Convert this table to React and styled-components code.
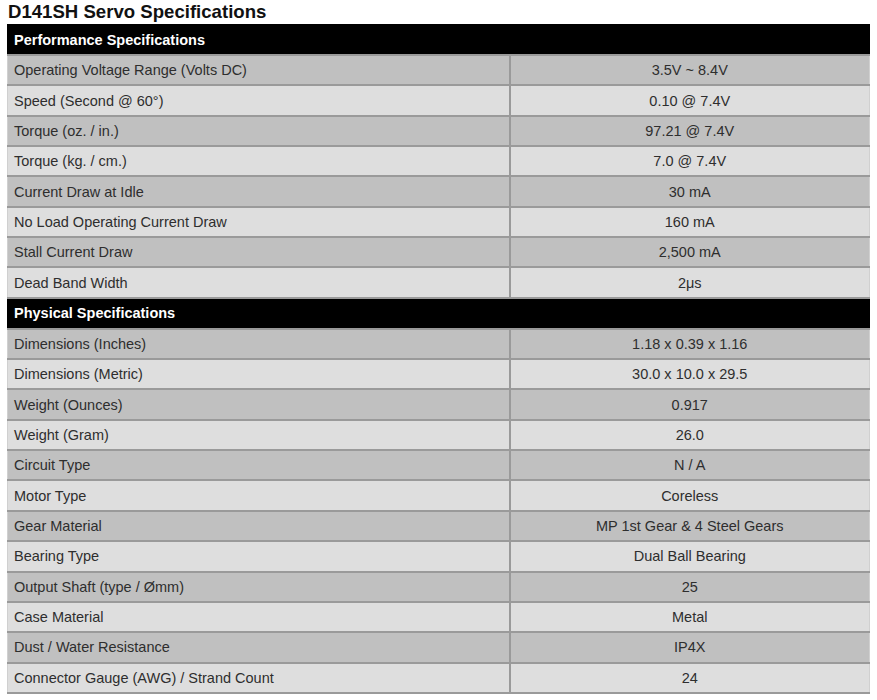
import styled, { createGlobalStyle } from 'styled-components';

const GlobalStyle = createGlobalStyle`
  body {
    margin: 0;
    background: #ffffff;
    font-family: 'Liberation Sans', Arial, sans-serif;
  }
`;

const sections = [
  {
    title: 'Performance Specifications',
    rows: [
      ['Operating Voltage Range (Volts DC)', '3.5V ~ 8.4V'],
      ['Speed (Second @ 60°)', '0.10 @ 7.4V'],
      ['Torque (oz. / in.)', '97.21 @ 7.4V'],
      ['Torque (kg. / cm.)', '7.0 @ 7.4V'],
      ['Current Draw at Idle', '30 mA'],
      ['No Load Operating Current Draw', '160 mA'],
      ['Stall Current Draw', '2,500 mA'],
      ['Dead Band Width', '2μs'],
    ],
  },
  {
    title: 'Physical Specifications',
    rows: [
      ['Dimensions (Inches)', '1.18 x 0.39 x 1.16'],
      ['Dimensions (Metric)', '30.0 x 10.0 x 29.5'],
      ['Weight (Ounces)', '0.917'],
      ['Weight (Gram)', '26.0'],
      ['Circuit Type', 'N / A'],
      ['Motor Type', 'Coreless'],
      ['Gear Material', 'MP 1st Gear & 4 Steel Gears'],
      ['Bearing Type', 'Dual Ball Bearing'],
      ['Output Shaft (type / Ømm)', '25'],
      ['Case Material', 'Metal'],
      ['Dust / Water Resistance', 'IP4X'],
      ['Connector Gauge (AWG) / Strand Count', '24'],
    ],
  },
];

const Page = styled.div`
  padding: 0 7px;
`;

const Title = styled.h2`
  margin: 0;
  padding: 1px 0 0 1px;
  height: 23px;
  font-size: 18.6px;
  font-weight: bold;
  line-height: 22px;
  color: #111;
`;

const Table = styled.table`
  width: 863px;
  border-collapse: collapse;
  border: 1px solid #d0d0d0;
`;

const HeadCell = styled.td`
  background: #000;
  color: #fff;
  font-size: 14.5px;
  font-weight: bold;
  height: 29px;
  padding: 0 6px;
  border: 1px solid #000;
`;

const Cell = styled.td`
  background: ${({ $dark }) => ($dark ? '#c0c0c0' : '#dedede')};
  color: #2e2e2e;
  font-size: 14.5px;
  height: 28.35px;
  padding: 0 6px;
  border: 2px solid #9a9a9a;
  border-left: none;
  border-right: none;
  text-align: ${({ $center }) => ($center ? 'center' : 'left')};

  & + & {
    border-left: 2px solid #9a9a9a;
  }
`;

export default function App() {
  return (
    <Page>
      <GlobalStyle />
      <Title>D141SH Servo Specifications</Title>
      <Table>
        <colgroup>
          <col style={{ width: 502 }} />
          <col />
        </colgroup>
        <tbody>
          {sections.map(section => [
            <tr key={section.title}>
              <HeadCell colSpan={2}>{section.title}</HeadCell>
            </tr>,
            ...section.rows.map(([label, value], i) => (
              <tr key={label}>
                <Cell $dark={i % 2 === 0}>{label}</Cell>
                <Cell $dark={i % 2 === 0} $center>
                  {value}
                </Cell>
              </tr>
            )),
          ])}
        </tbody>
      </Table>
    </Page>
  );
}
